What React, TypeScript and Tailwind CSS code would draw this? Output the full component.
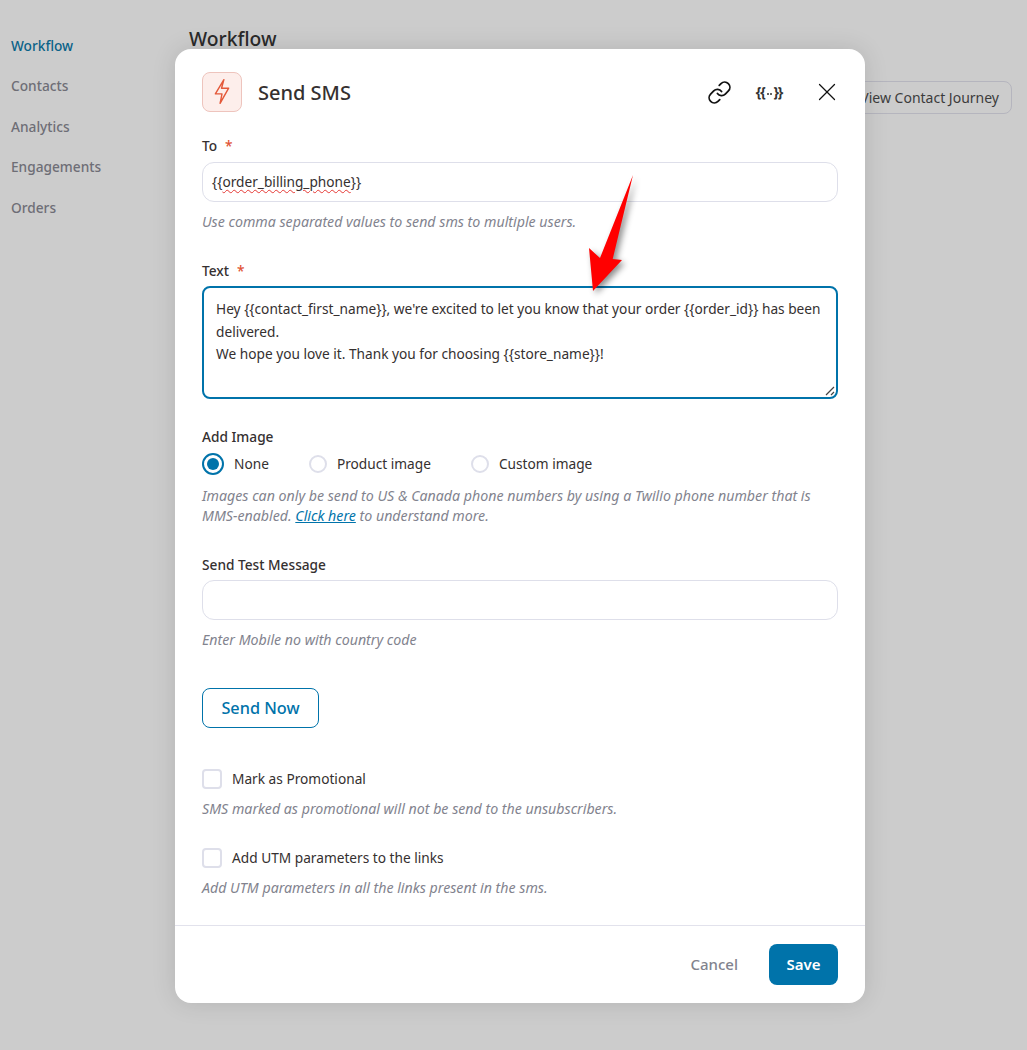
import { Link, X } from "lucide-react";

const navItems = ["Workflow", "Contacts", "Analytics", "Engagements", "Orders"];

function Label({ text, required, gap }: { text: string; required?: boolean; gap?: string }) {
  return (
    <div className="flex h-5 items-center text-[13.7px] leading-5 font-medium text-[#353030]">
      {text}
      {required && <span className={`${gap} text-[#e15334]`}>*</span>}
    </div>
  );
}

function Hint({ children, className }: { children: React.ReactNode; className?: string }) {
  return <p className={`text-[14.2px] leading-5 text-[#82838e] italic ${className ?? ""}`}>{children}</p>;
}

function Radio({ label, checked }: { label: string; checked?: boolean }) {
  return (
    <div className="flex items-center gap-[10px] text-[13.7px] text-[#353030]">
      {checked ? (
        <span className="flex h-[22px] w-[22px] items-center justify-center rounded-full border-2 border-[#0073aa]">
          <span className="h-3 w-3 rounded-full bg-[#0073aa]" />
        </span>
      ) : (
        <span className="ml-[2px] h-[18px] w-[18px] rounded-full border-2 border-[#dedfea]" />
      )}
      {label}
    </div>
  );
}

function Check({ label }: { label: string }) {
  return (
    <div className="flex items-center gap-[10px] text-[13.7px] leading-5 text-[#353030]">
      <span className="h-5 w-5 rounded-[4px] border-2 border-[#dedfea]" />
      {label}
    </div>
  );
}

export default function App() {
  return (
    <div className="relative flex h-[1050px] overflow-hidden bg-[#cccccc] font-['Noto_Sans','Open_Sans',sans-serif]">
      <nav className="flex w-[189px] shrink-0 flex-col gap-[20.5px] pt-[35.6px] pl-[11px] text-[13.7px] leading-5 font-medium text-[#6e6e76]">
        {navItems.map((item, i) => (
          <div key={item} className={i === 0 ? "text-[#0a6288]" : ""}>
            {item}
          </div>
        ))}
      </nav>
      <main className="flex flex-1 items-start justify-between pt-[27px] pr-[15px]">
        <h1 className="text-[19.3px] leading-6 font-medium text-[#2a2a2a]">Workflow</h1>
        <button className="mt-[54px] h-[33px] rounded-lg border border-[#b5b5be] px-3 text-[14px] text-[#3c3c3c]">
          View Contact Journey
        </button>
      </main>

      {/* modal */}
      <div className="absolute top-[49px] left-[175px] flex h-[954px] w-[690px] flex-col rounded-2xl bg-white shadow-[0_0_24px_rgba(0,0,0,0.12)]">
        <div className="flex-1 px-[27px] pt-[23px]">
          <header className="flex h-10 items-center">
            <span className="flex h-10 w-10 items-center justify-center rounded-lg border border-[#eec4bd] bg-[#fdeeeb]">
              <svg viewBox="0 0 40 40" className="h-10 w-10" fill="none" stroke="#e4593a" strokeWidth="1.5" strokeLinejoin="round">
                <path d="M22 7 13 22H20L18 32 27 16H19.5Z" />
              </svg>
            </span>
            <h2 className="ml-4 pt-[1px] text-[20px] font-medium text-[#353030]">Send SMS</h2>
            <div className="ml-auto mr-[-4px] flex items-center text-[#111]">
              <Link size={25} strokeWidth={1.7} />
              <span className="mr-[31px] ml-[25px] flex w-6 items-center justify-center text-[14px] leading-none font-bold tracking-[-1.2px] text-[#333]">
                {"{{"}
                <span className="mx-[2px] mt-[3px] flex gap-[1px]">
                  <span className="h-[2px] w-[2px] rounded-full bg-[#333]" />
                  <span className="h-[2px] w-[2px] rounded-full bg-[#333]" />
                </span>
                {"}}"}
              </span>
              <X size={30} strokeWidth={1} />
            </div>
          </header>

          <div className="mt-[24px]">
            <Label text="To" required gap="ml-2" />
          </div>
          <div className="mt-[6px] flex h-10 items-center rounded-xl border border-[#dedfea] px-[9px] text-[13.7px] text-[#353030]">
            {"{{"}
            <span className="underline decoration-[#e53935] decoration-wavy decoration-1 underline-offset-2">
              order_billing_phone
            </span>
            {"}}"}
          </div>
          <Hint className="mt-[10px]">Use comma separated values to send sms to multiple users.</Hint>

          <div className="mt-[29px]">
            <Label text="Text" required gap="ml-2" />
          </div>
          <div className="relative mt-[5px] h-[113px] rounded-lg border-2 border-[#0073aa] px-3 pt-[10px] text-[13.7px] leading-[22.5px] text-[#353030]">
            <p>
              Hey {"{{contact_first_name}}"}, we're excited to let you know that your order {"{{order_id}}"} has been
              delivered.
            </p>
            <p>We hope you love it. Thank you for choosing {"{{store_name}}"}!</p>
            <svg viewBox="0 0 10 10" className="absolute right-[1px] bottom-[1px] h-[10px] w-[10px]" stroke="#444" strokeWidth="1.2">
              <path d="M1 9 9 1M6 9l3-3" />
            </svg>
          </div>

          <div className="mt-[28px]">
            <Label text="Add Image" />
          </div>
          <div className="mt-[6px] flex h-[22px] items-center gap-[38px]">
            <Radio label="None" checked />
            <Radio label="Product image" />
            <Radio label="Custom image" />
          </div>
          <Hint className="mt-[11px]">
            Images can only be send to US &amp; Canada phone numbers by using a Twilio phone number that is
            <br />
            MMS-enabled. <span className="text-[#0073aa] underline">Click here</span> to understand more.
          </Hint>

          <div className="mt-[29px]">
            <Label text="Send Test Message" />
          </div>
          <div className="mt-[5px] h-10 rounded-xl border border-[#dedfea]" />
          <Hint className="mt-[10px]">Enter Mobile no with country code</Hint>

          <button className="mt-[38px] h-10 w-[117px] rounded-lg border border-[#0073aa] pt-[1px] text-[16.3px] font-medium text-[#0073aa]">
            Send Now
          </button>

          <div className="mt-[41px]">
            <Check label="Mark as Promotional" />
          </div>
          <Hint className="mt-[10px]">SMS marked as promotional will not be send to the unsubscribers.</Hint>
          <div className="mt-[29px]">
            <Check label="Add UTM parameters to the links" />
          </div>
          <Hint className="mt-[10px]">Add UTM parameters in all the links present in the sms.</Hint>
        </div>

        <footer className="flex h-[78px] items-center justify-end gap-[31px] border-t border-[#e2e2ec] px-[27px]">
          <span className="text-[15px] font-medium text-[#82838e]">Cancel</span>
          <button className="h-[41px] w-[69px] rounded-lg bg-[#0073aa] text-[15px] font-semibold text-white">
            Save
          </button>
        </footer>
      </div>

      {/* annotation arrow */}
      <svg
        viewBox="0 0 60 130"
        className="absolute top-[170px] left-[580px] h-[130px] w-[60px] drop-shadow-[3px_3px_3px_rgba(0,0,0,0.45)]"
      >
        <path d="M53 5 32.7 89 42 90 13 121 9 78 20 88Z" fill="#ff0000" />
      </svg>
    </div>
  );
}
